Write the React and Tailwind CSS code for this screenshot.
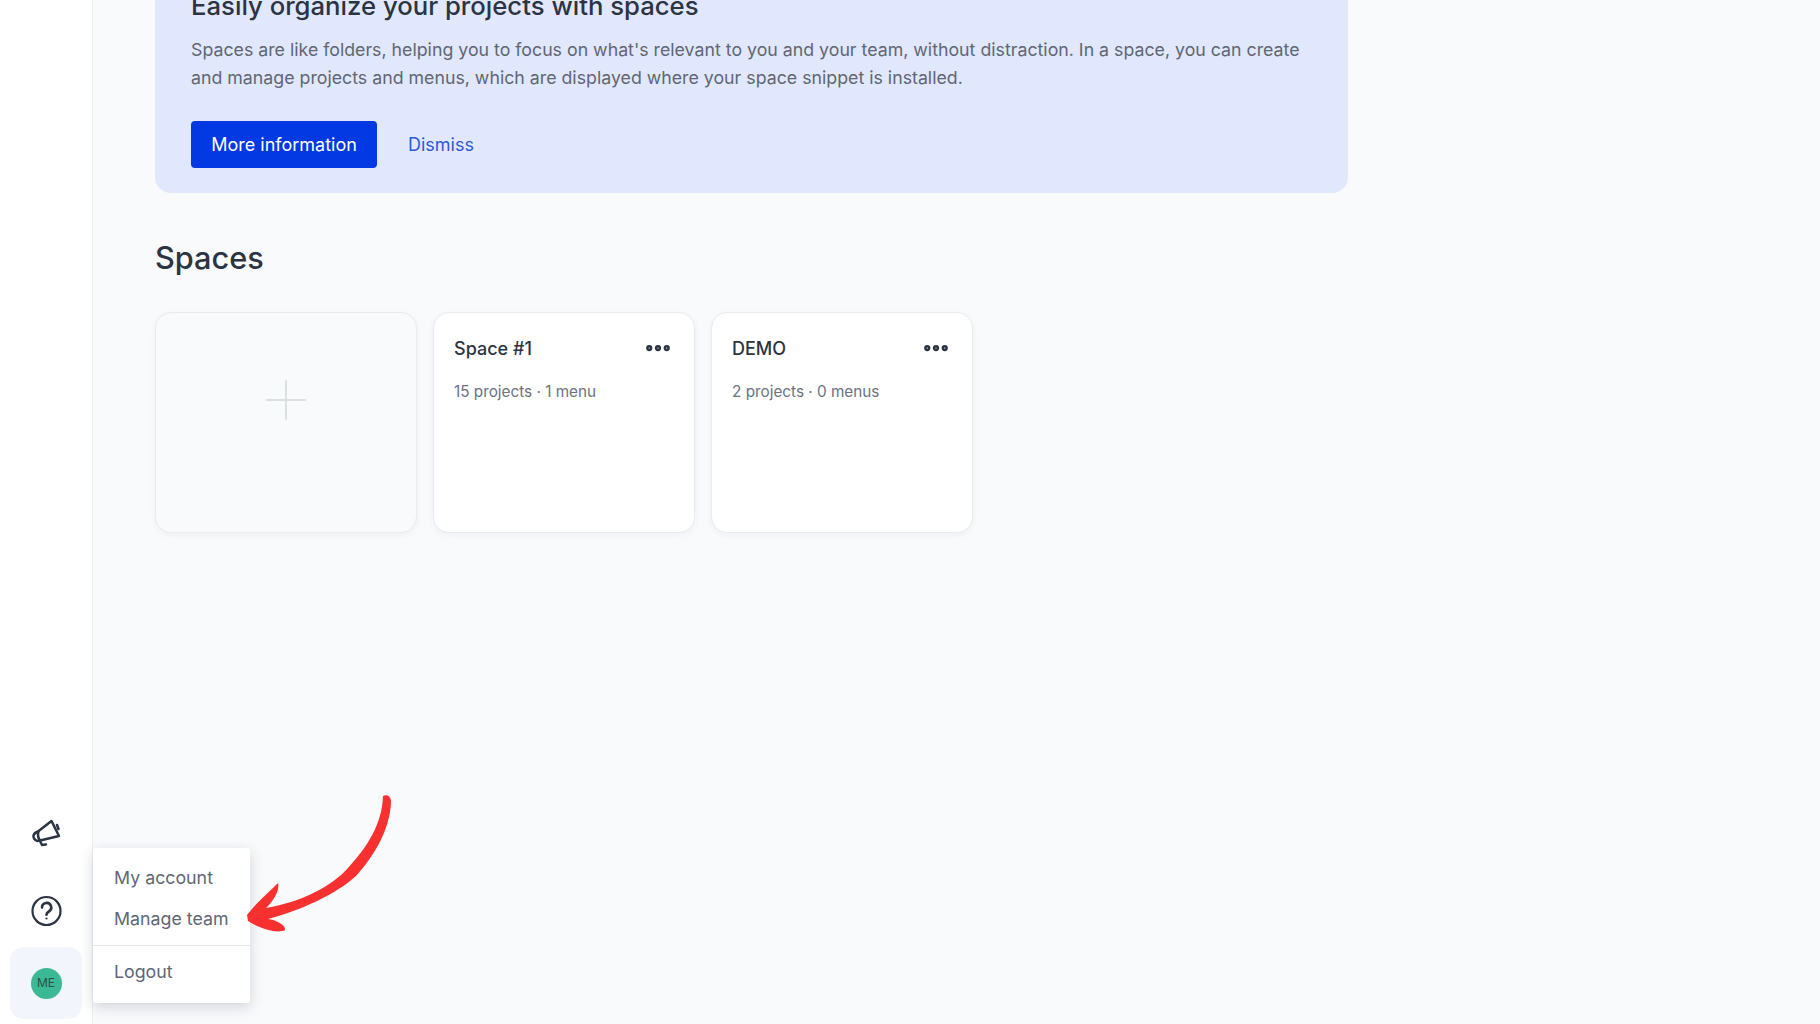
import { MoreHorizontal, Plus } from 'lucide-react'

const SPACES = [
  { name: 'Space #1', meta: '15 projects · 1 menu' },
  { name: 'DEMO', meta: '2 projects · 0 menus' },
]

function MegaphoneIcon() {
  return (
    <svg className="mb-[38px] text-[#2b3442]" width="40" height="40" viewBox="0 0 40 40" fill="none" stroke="currentColor" strokeWidth="2.5" strokeLinejoin="round" strokeLinecap="round">
      <path d="M25.5 9 L33 24 L14 28.5 L11 29 Q7 27 7.5 23.5 Q8 21 12 19.5 Z" />
      <path d="M12.5 19.5 Q11 24.5 14 28.5" />
      <path d="M14 29 L16 33 L20 32.5" />
      <path d="M31 13 L32.5 17" />
    </svg>
  )
}

function HelpIcon() {
  return (
    <svg className="mb-[17px] text-[#2b3442]" width="40" height="40" viewBox="0 0 40 40" fill="none" stroke="currentColor" strokeWidth="2.2" strokeLinecap="round">
      <circle cx="20.5" cy="21" r="14" />
      <path strokeWidth="2.6" d="M16 17.5 a4.6 4.6 0 1 1 6.8 4 c-1.6 .9 -2.3 1.6 -2.3 3.3" />
      <circle cx="20.5" cy="28.5" r="1.1" fill="currentColor" stroke="none" />
    </svg>
  )
}

function AccountMenu() {
  return (
    <div className="absolute left-[93px] top-[848px] w-[157px] h-[155px] bg-white rounded-[3px] shadow-[0_4px_14px_rgba(30,41,59,0.18)] z-10 text-[17.8px] leading-[24px] text-[#5f6674]">
      <div className="pt-[18px] pl-[21px] h-[97px] flex flex-col gap-[17px]">
        <div>My account</div>
        <div>Manage team</div>
      </div>
      <div className="h-px bg-[#e3e6ec]" />
      <div className="pt-[14px] pl-[21px]">Logout</div>
    </div>
  )
}

function Arrow() {
  return (
    <svg className="absolute left-[240px] top-[790px] z-20" width="160" height="150" viewBox="0 0 160 150" fill="#f8302f">
      <path d="M143 6 C147 4 151 6 151 12 C150 40 134 66 116 86 C96 104 62 120 28 129 C36 130 46 135 45 140 C38 144 20 139 8 131 L7 125 C16 113 28 103 38 93 C40 100 34 110 26 118 C62 112 92 96 108 78 C128 56 142 34 143 6 Z" />
    </svg>
  )
}

export default function App() {
  return (
    <div className="relative flex h-[1024px] w-[1820px] overflow-hidden bg-[#f9fafc] text-[#2b3442] font-['Inter',sans-serif]">

      {/* Sidebar */}
      <aside className="w-[93px] shrink-0 bg-white border-r border-[#eceef2] flex flex-col items-center justify-end pb-[5px]">
        <MegaphoneIcon />
        <HelpIcon />
        <div className="w-[72px] h-[72px] rounded-[14px] bg-[#f3f5fd] flex items-center justify-center">
          <div className="w-[31px] h-[31px] rounded-full bg-[#3bb894] flex items-center justify-center text-[12px] text-[#28504e]">ME</div>
        </div>
      </aside>

      {/* Main */}
      <main className="flex-1 pl-[62px]">
        <section className="w-[1193px] h-[225px] -mt-[32px] bg-[#e1e8fd] rounded-[16px] pl-[36px] pt-[22px]">
          <h2 className="text-[25.7px] leading-[32px] font-medium text-[#2b3442]">Easily organize your projects with spaces</h2>
          <p className="mt-[14px] text-[17.75px] leading-[27.5px] text-[#5f6674] w-[1130px]">
            Spaces are like folders, helping you to focus on what's relevant to you and your team, without distraction. In a space, you can create and manage projects and menus, which are displayed where your space snippet is installed.
          </p>
          <div className="mt-[30px] flex items-center gap-[31px]">
            <button className="w-[186px] h-[47px] rounded-[4px] bg-[#0339e3] text-white text-[18px]">More information</button>
            <span className="text-[18px] text-[#2f58d6]">Dismiss</span>
          </div>
        </section>

        <h1 className="mt-[45px] text-[30.7px] leading-[40px] font-medium text-[#2b3442]">Spaces</h1>

        <div className="mt-[34px] flex gap-[16px]">
          <div className="w-[262px] h-[221px] rounded-[16px] bg-[#f9fafc] border border-[#e9ebef] shadow-[0_2px_6px_rgba(30,41,59,0.05)] flex justify-center pt-[54px]">
            <Plus className="text-[#d9dfe5]" size={66} strokeWidth={0.7} />
          </div>
          {SPACES.map((s) => (
            <div key={s.name} className="w-[262px] h-[221px] rounded-[16px] bg-white border border-[#e9ebef] shadow-[0_2px_6px_rgba(30,41,59,0.05)] pl-[20px] pr-[21px] pt-[23px]">
              <div className="flex items-center justify-between h-[24px]">
                <span className="text-[18px] font-medium text-[#2b3442]">{s.name}</span>
                <MoreHorizontal className="text-[#2b3442]" size={30} strokeWidth={3} />
              </div>
              <div className="mt-[21px] text-[15.3px] leading-[22px] text-[#6b7280]">{s.meta}</div>
            </div>
          ))}
        </div>
      </main>

      <AccountMenu />
      <Arrow />
    </div>
  )
}
